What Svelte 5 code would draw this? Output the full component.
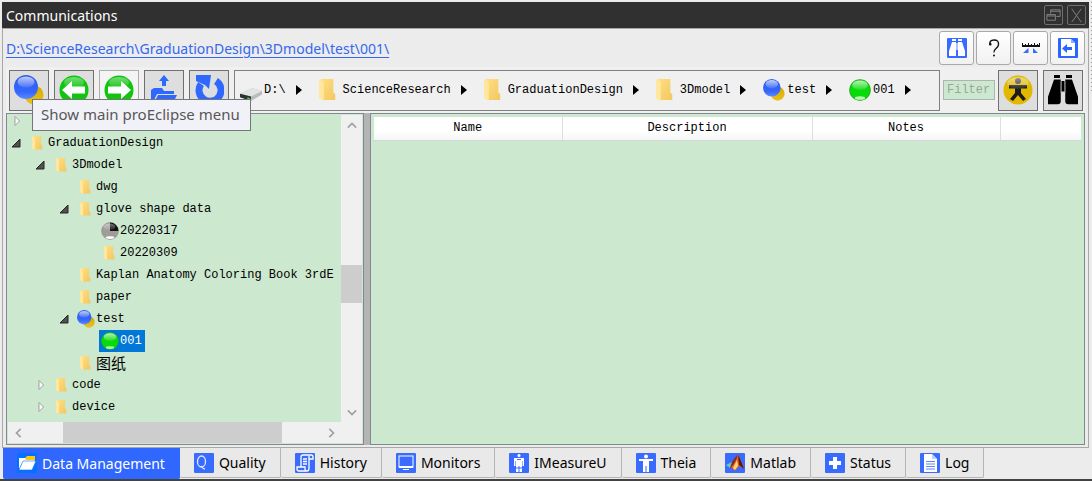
<script>
  const toolButtons = [
    { icon: 'spheres', label: 'Show main proEclipse menu' },
    { icon: 'back', label: 'Back' },
    { icon: 'forward', label: 'Forward', light: true },
    { icon: 'up', label: 'Up one level' },
    { icon: 'refresh', label: 'Refresh' }
  ];

  const headerButtons = [
    { icon: 'find', label: 'Find' },
    { icon: 'help', label: 'Help' },
    { icon: 'scale', label: 'Scale' },
    { icon: 'exit', label: 'Exit' }
  ];

  const crumbs = [
    { icon: 'drive', label: 'D:\\' },
    { icon: 'folder', label: 'ScienceResearch' },
    { icon: 'folder', label: 'GraduationDesign' },
    { icon: 'folder', label: '3Dmodel' },
    { icon: 'spheres', label: 'test' },
    { icon: 'green', label: '001' }
  ];

  const nodes = [
    { depth: 0, label: '', state: 'closed' },
    { depth: 0, label: 'GraduationDesign', icon: 'folder', state: 'open' },
    { depth: 1, label: '3Dmodel', icon: 'folder', state: 'open' },
    { depth: 2, label: 'dwg', icon: 'folder' },
    { depth: 2, label: 'glove shape data', icon: 'folder', state: 'open' },
    { depth: 3, label: '20220317', icon: 'grey' },
    { depth: 3, label: '20220309', icon: 'folder' },
    { depth: 2, label: 'Kaplan Anatomy Coloring Book 3rdE', icon: 'folder' },
    { depth: 2, label: 'paper', icon: 'folder' },
    { depth: 2, label: 'test', icon: 'spheres', state: 'open' },
    { depth: 3, label: '001', icon: 'green' },
    { depth: 2, label: '图纸', icon: 'folder', cjk: true },
    { depth: 1, label: 'code', icon: 'folder', state: 'closed' },
    { depth: 1, label: 'device', icon: 'folder', state: 'closed' }
  ];

  const tabs = [
    { icon: 'data', label: 'Data Management' },
    { icon: 'quality', label: 'Quality' },
    { icon: 'history', label: 'History' },
    { icon: 'monitor', label: 'Monitors' },
    { icon: 'imeasure', label: 'IMeasureU' },
    { icon: 'theia', label: 'Theia' },
    { icon: 'matlab', label: 'Matlab' },
    { icon: 'status', label: 'Status' },
    { icon: 'log', label: 'Log' }
  ];

  let activeTab = $state('Data Management');
  let selected = $state('001');
  let filter = $state('');
</script>

{#snippet icon(name)}
  {#if name === 'folder'}
    <svg viewBox="2 1 17 23" preserveAspectRatio="xMinYMid" aria-hidden="true">
      <path d="M4 1h13v14l2 2v6H5z" fill="url(#folderBack)" />
      <path d="M2 1l5 3v20l-5-3z" fill="#ffe7a0" />
    </svg>
  {:else if name === 'spheres'}
    <svg viewBox="0 0 30 30" aria-hidden="true">
      <circle cx="20" cy="20" r="9.5" fill="url(#gold)" />
      <circle cx="12" cy="12" r="12" fill="url(#blue)" />
      <ellipse cx="12" cy="7" rx="8.5" ry="5.5" fill="url(#shine)" />
    </svg>
  {:else if name === 'green'}
    <svg viewBox="0 0 30 30" aria-hidden="true">
      <circle cx="15" cy="15" r="14" fill="#08dc08" stroke="#22b022" stroke-width="1.4" />
      <ellipse cx="15" cy="8.5" rx="10.5" ry="6.5" fill="url(#shine)" />
      <ellipse cx="15" cy="26" rx="7" ry="2.4" fill="#b8ffb0" />
    </svg>
  {:else if name === 'grey'}
    <svg viewBox="0 0 30 30" aria-hidden="true">
      <circle cx="15" cy="15" r="14" fill="#a09c9c" stroke="#8c8888" />
      <path d="M15 15V1a14 14 0 0 1 14 14z" fill="#111" />
      <ellipse cx="14" cy="8" rx="10" ry="5.5" fill="url(#shine)" opacity=".6" />
      <ellipse cx="15" cy="26" rx="7" ry="2.4" fill="#fff" />
    </svg>
  {:else if name === 'drive'}
    <svg viewBox="0 0 24 24" aria-hidden="true">
      <path d="M0 16l13-6 11 3v4l-12 7L0 20z" fill="#b9bcbe" />
      <path d="M0 16l13-6 11 3-12 6z" fill="#e2e3e4" />
      <path d="M0 16l12 3v5L0 20z" fill="#2c3030" />
      <path d="M8 20l3 1v2l-3-1z" fill="#35e535" />
    </svg>
  {:else if name === 'back' || name === 'forward'}
    <svg viewBox="0 0 30 30" aria-hidden="true">
      <circle cx="15" cy="15" r="14.5" fill="#10c410" />
      <ellipse cx="15" cy="7.5" rx="10" ry="5.5" fill="url(#shine)" opacity=".6" />
      {#if name === 'back'}
        <path d="M3 15l10-9v5.5h13v7H13V24z" fill="#fff" />
      {:else}
        <path d="M27 15L17 6v5.5H4v7h13V24z" fill="#fff" />
      {/if}
    </svg>
  {:else if name === 'up'}
    <svg viewBox="0 0 30 30" aria-hidden="true" fill="#2e68ff">
      <path d="M15 0l5 6h-3v5h-4V6h-3z" />
      <path d="M2 30V15l3-2h8l2 3h10v3H8L4 27z" />
      <path d="M9 20h19l-5 10H4z" />
    </svg>
  {:else if name === 'refresh'}
    <svg viewBox="0 0 30 30" aria-hidden="true">
      <path d="M7 9a11 11 0 1 0 15-3" fill="none" stroke="#2e68ff" stroke-width="7" />
      <path d="M2 0h15l-2 14-4-4-9-4z" fill="#2e68ff" />
    </svg>
  {:else if name === 'find' || name === 'binoculars'}
    <svg viewBox="0 0 20 20" aria-hidden="true">
      {#if name === 'find'}
        <rect width="20" height="20" rx="1" fill="#3a6bff" />
        <path d="M5 1h4v2H5zm6 0h4v2h-4zM5 4h4v14H2v-5zm6 0h4l3 9v5h-7z" fill="#fff" />
        <path d="M9 5h2v7H9z" fill="#a9c0ff" />
      {:else}
        <path d="M4 0h4v2H4zm8 0h4v2h-4zM4 3h4.500v14.500q0 2-2 2H0v-5zm7.500 0H16l4 11.500v5h-6.500q-2 0-2-2zM9 4h2v7H9z" />
        <path d="M8.500 4v8M11.500 4v8" stroke="#777" stroke-width=".5" />
      {/if}
    </svg>
  {:else if name === 'help'}
    <svg viewBox="0 0 20 20" aria-hidden="true" fill="none" stroke="#111" stroke-width="1.4">
      <path d="M6 7q-1-5 4-5t4.500 4.500q0 2-2.500 4T10 14.500" />
      <circle cx="10" cy="17.500" r="1" fill="#111" stroke="none" />
      <circle cx="6.300" cy="6.300" r=".6" fill="#111" />
    </svg>
  {:else if name === 'scale'}
    <svg viewBox="0 0 20 20" aria-hidden="true">
      <path d="M1 8h18" stroke="#111" stroke-width="2" />
      <path d="M1.500 5v3M4.500 6v2M7.500 5v3M10.500 6v2M13.500 5v3M16.500 6v2M18.500 5v3" stroke="#111" />
      <path d="M7.500 10v5H2zM12 10l5 5h-5z" fill="#3a6bff" />
    </svg>
  {:else if name === 'exit'}
    <svg viewBox="0 0 20 20" aria-hidden="true">
      <rect width="20" height="20" rx="1" fill="#2b66ff" />
      <path d="M3 1h10l4 4v13H3z" fill="#fff" />
      <path d="M13 1v4h4z" fill="#8ab0ff" />
      <path d="M4 10.500l5-4.500v3h5v3H9v3z" fill="#2b66ff" />
    </svg>
  {:else if name === 'person'}
    <svg viewBox="0 0 30 30" aria-hidden="true">
      <circle cx="15" cy="15" r="14.500" fill="#e0b800" />
      <circle cx="15" cy="6" r="3" fill="#333" />
      <path d="M6 10h18v3.500h-6V18l5 6-3 2-5-6-5 6-3-2 5-6v-4.500H6z" fill="#1c1c1c" />
      <ellipse cx="15" cy="8" rx="11" ry="6" fill="url(#shine)" opacity=".7" />
    </svg>
  {:else if name === 'matlab'}
    <svg viewBox="0 0 20 20" aria-hidden="true">
      <rect width="20" height="20" rx="1" fill="#3a6bff" />
      <path d="M1 12l6-3 2 3-4 3z" fill="#6fc3c8" />
      <path d="M7 9q4-6 6-7l-4 13-4 0z" fill="#8a2a12" />
      <path d="M13 2q2 3 6 14l-5-3-4 5-4-4q4-3 7-12z" fill="#e8641a" />
      <path d="M13 2q2 3 6 14l-5-4z" fill="#5e1608" />
      <path d="M12 7l1 6-3 4-2-2z" fill="#ffd17a" />
    </svg>
  {:else}
    <svg viewBox="0 0 20 20" aria-hidden="true">
      <rect width="20" height="20" rx="1" fill={name === 'data' ? '#0870ff' : '#3a6bff'} />
      {#if name === 'data'}
        <path d="M8 5l2-2h8v6H8z" fill="#ffc61a" />
        <path d="M2 5h6l1 2h8v2H6l-4 7z" fill="#fff" />
        <path d="M6 8h13l-4 9H2z" fill="#fff" stroke="#0870ff" stroke-width=".6" />
      {:else if name === 'quality'}
        <ellipse cx="7.500" cy="8.500" rx="4" ry="5.500" fill="none" stroke="#dfe8ff" stroke-width="1.300" />
        <path d="M7 13q2 3 4 3" fill="none" stroke="#dfe8ff" stroke-width="1.300" />
      {:else if name === 'history'}
        <path d="M6 14V4q0-2 2-2h8q2 0 2 2v2h-4M14 3v12q0 3-2 3H4q-2 0-2-2v-2h8v2q0 2 2 2M8 6h4M8 8.500h4M8 11h4" fill="none" stroke="#fff" stroke-width="1.300" />
      {:else if name === 'monitor'}
        <rect x="3" y="3" width="14" height="11" fill="none" stroke="#fff" />
        <path d="M3 13h14v2H3zM7 16h6v1H7z" fill="#fff" />
      {:else if name === 'imeasure'}
        <circle cx="10" cy="2.500" r="1.500" fill="#fff" />
        <path d="M5 5h10v8h-1.500V8H13v11h-2.500v-6h-1v6H7V8h-.5v5H5z" fill="#fff" />
        <path d="M8 6.500h4M7 15h6" stroke="#3a6bff" />
      {:else if name === 'theia'}
        <circle cx="10" cy="3.500" r="2" fill="#fff" />
        <path d="M3 6h14v2h-4v11h-2.500v-6h-1v6H7V8H3z" fill="#fff" />
      {:else if name === 'status'}
        <path d="M8 4h4v4h4v4h-4v4H8v-4H4V8h4z" fill="#fff" />
      {:else if name === 'log'}
        <path d="M4 1h8l5 5v13H4z" fill="#fff" />
        <path d="M12 1v5h5z" fill="#bcd0ff" />
        <path d="M6 8.500h9M6 11h9M6 13.500h9M6 16h9" stroke="#5b85ff" />
      {/if}
    </svg>
  {/if}
{/snippet}

{#snippet chevron(d)}
  <svg viewBox="0 0 12 12" aria-hidden="true">
    <path {d} fill="none" stroke="#a0a0a0" stroke-width="2" />
  </svg>
{/snippet}

<svg class="defs" aria-hidden="true">
  <defs>
    <linearGradient id="folderBack" x1="0" x2="1" y1="0" y2="1">
      <stop offset="0" stop-color="#ffdf85" />
      <stop offset="1" stop-color="#f3c75e" />
    </linearGradient>
    <linearGradient id="blue" x1="0" x2="0" y1="0" y2="1">
      <stop offset="0" stop-color="#2f5bea" />
      <stop offset=".7" stop-color="#3467ff" />
      <stop offset="1" stop-color="#5b8aff" />
    </linearGradient>
    <linearGradient id="gold" x1="0" x2="0" y1="0" y2="1">
      <stop offset="0" stop-color="#d6a800" />
      <stop offset="1" stop-color="#e9c21c" />
    </linearGradient>
    <linearGradient id="shine" x1="0" x2="0" y1="0" y2="1">
      <stop offset="0" stop-color="#fff" stop-opacity=".7" />
      <stop offset="1" stop-color="#fff" stop-opacity=".1" />
    </linearGradient>
  </defs>
</svg>

<div class="app">
  <div class="window">
    <header class="title-bar">
      <h1>Communications</h1>
      <button aria-label="Restore">
        <svg viewBox="0 0 18 18" aria-hidden="true">
          <path d="M6 7V3h10v7h-4M6 4.500h10M2 8h9v6H2zM2 9.500h9" />
        </svg>
      </button>
      <button aria-label="Close">
        <svg viewBox="0 0 18 18" aria-hidden="true">
          <path d="M4 2l10 14M14 2L4 16" />
        </svg>
      </button>
    </header>

    <main class="panel">
      <div class="path-row">
        <a href="#path">D:\ScienceResearch\GraduationDesign\3Dmodel\test\001\</a>
        {#each headerButtons as button}
          <button class="small-button" aria-label={button.label}>{@render icon(button.icon)}</button>
        {/each}
      </div>

      <div class="toolbar">
        {#each toolButtons as button, i}
          <div class="tool">
            <button class="tool-button" class:light={button.light} aria-label={button.label}>
              {@render icon(button.icon)}
            </button>
            {#if i === 0}
              <div class="tooltip" role="tooltip">{button.label}</div>
            {/if}
          </div>
        {/each}
        <nav class="crumbs" aria-label="Current folder">
          {#each crumbs as crumb}
            <button class="crumb">
              <span class="crumb-icon">{@render icon(crumb.icon)}</span>
              {crumb.label}
              <svg class="crumb-arrow" viewBox="0 0 6 10" aria-hidden="true"><path d="M0 0l6 5-6 5z" /></svg>
            </button>
          {/each}
        </nav>
        <input class="filter" placeholder="Filter" aria-label="Filter" bind:value={filter} />
        <button class="tool-button" aria-label="Subject">{@render icon('person')}</button>
        <button class="tool-button" aria-label="Search">{@render icon('binoculars')}</button>
      </div>

      <div class="content">
        <section class="tree-box">
          <ul class="tree" role="tree">
            {#each nodes as node}
              <li
                class="node"
                role="treeitem"
                aria-selected={node.label === selected}
                aria-expanded={node.state ? node.state === 'open' : undefined}
                style="padding-left: {3 + node.depth * 24}px"
              >
                <span class="toggle">
                  {#if node.state === 'open'}
                    <svg viewBox="0 0 10 10" aria-hidden="true"><path d="M9 1v8H1z" fill="#505050" stroke="#262626" /></svg>
                  {:else if node.state === 'closed'}
                    <svg viewBox="0 0 10 10" aria-hidden="true"><path d="M4 0.500v9L8.500 5z" fill="#fff" stroke="#a0a0a0" /></svg>
                  {/if}
                </span>
                {#if node.label}
                  <button
                    class="item"
                    class:selected={node.label === selected}
                    class:cjk={node.cjk}
                    onclick={() => (selected = node.label)}
                  >
                    <span class="node-icon" class:narrow={node.icon === 'folder'}>{@render icon(node.icon)}</span>
                    {node.label}
                  </button>
                {/if}
              </li>
            {/each}
          </ul>
          <div class="scroll vertical">
            <button aria-label="Scroll up">{@render chevron('M1 8l5-5 5 5')}</button>
            <div class="track"><div class="thumb"></div></div>
            <button aria-label="Scroll down">{@render chevron('M1 4l5 5 5-5')}</button>
          </div>
          <div class="scroll horizontal">
            <button aria-label="Scroll left">{@render chevron('M8 1L3 6l5 5')}</button>
            <div class="track"><div class="thumb"></div></div>
            <button aria-label="Scroll right">{@render chevron('M4 1l5 5-5 5')}</button>
          </div>
          <div class="corner"></div>
        </section>
        <div class="splitter"></div>
        <section class="table-box">
          <table>
            <thead>
              <tr>
                <th class="name">Name</th>
                <th class="description">Description</th>
                <th class="notes">Notes</th>
                <td></td>
              </tr>
            </thead>
          </table>
        </section>
      </div>
    </main>

    <nav class="tabs" aria-label="Panels">
      {#each tabs as tab}
        <button class="tab" class:active={tab.label === activeTab} onclick={() => (activeTab = tab.label)}>
          {@render icon(tab.icon)}
          {tab.label}
        </button>
      {/each}
    </nav>
  </div>
  <div class="grip"></div>
  <footer class="edge"></footer>
</div>

<style>
  :global(body) {
    margin: 0;
    background: #ececec;
  }

  .defs {
    position: absolute;
    width: 0;
    height: 0;
  }

  .app {
    display: grid;
    grid-template-columns: 1fr 2px;
    grid-template-rows: 1fr 2px;
    min-height: 100vh;
    background: #ececec;
    color: #000;
    font-family: "Noto Sans", "Open Sans", sans-serif;
    font-size: 14px;
  }

  .app * {
    box-sizing: border-box;
  }

  button {
    display: flex;
    align-items: center;
    justify-content: center;
    margin: 0;
    padding: 0;
    border: none;
    background: none;
    color: inherit;
    font: inherit;
    white-space: nowrap;
  }

  svg {
    display: block;
    flex: none;
  }

  .window {
    display: flex;
    flex-direction: column;
    min-width: 0;
    padding: 2px 1px 0 2px;
  }

  .title-bar {
    display: flex;
    align-items: center;
    gap: 4px;
    height: 26px;
    padding: 0 3px 0 4px;
    background: #303030;
    color: #fff;
  }

  h1 {
    flex: 1;
    margin: 0;
    font-size: 14px;
    font-weight: 400;
  }

  .title-bar button {
    width: 19px;
    height: 20px;
    border: 1px solid #6e6e6e;
    border-radius: 2px;
  }

  .title-bar svg {
    width: 17px;
    fill: none;
    stroke: #858585;
  }

  .panel {
    display: flex;
    flex: 1;
    flex-direction: column;
    padding: 0 3px 2px;
    border: 1px solid #a8a8a8;
  }

  .path-row {
    display: flex;
    align-items: center;
    gap: 2px;
    height: 38px;
  }

  .path-row a {
    flex: 1;
    color: #3468f0;
    text-underline-offset: 3px;
  }

  .small-button {
    width: 35px;
    height: 34px;
    border: 1px solid #a9a9a9;
    border-radius: 3px;
    background: linear-gradient(#fff, #f1f1f1);
  }

  .small-button svg {
    width: 20px;
    height: 20px;
  }

  .toolbar {
    display: flex;
    align-items: center;
    gap: 5px;
    height: 46px;
    padding: 0 2px 0 3px;
    background: #f0f0f0;
  }

  .tool {
    position: relative;
  }

  .tool-button {
    width: 40px;
    height: 41px;
    border: 1px solid #707070;
    background: #dedede;
  }

  .tool-button.light {
    border-color: #adadad;
    background: #f4f4f4;
  }

  .tool-button svg {
    width: 30px;
    height: 30px;
  }

  .tooltip {
    position: absolute;
    z-index: 2;
    top: 29px;
    left: 23px;
    height: 32px;
    padding: 0 10px 0 8px;
    border: 1px solid #767676;
    background: #f1f2f7;
    color: #575757;
    font-size: 15px;
    line-height: 29px;
    white-space: nowrap;
  }

  .crumbs {
    display: flex;
    flex: 1;
    align-items: center;
    gap: 17px;
    min-width: 0;
    height: 41px;
    padding: 0 5px;
    border: 1px solid #808080;
    background: #f0f0f0;
    overflow: hidden;
  }

  .crumb,
  .filter,
  .tree,
  th {
    font-family: "Liberation Mono", "Noto Sans CJK SC", monospace;
    font-size: 12px;
  }

  .crumb-icon {
    width: 24px;
  }

  .crumb-icon svg {
    width: 22px;
    height: 22px;
  }

  .crumb-arrow {
    width: 6px;
    height: 10px;
    margin-left: 10px;
  }

  .filter {
    width: 52px;
    height: 20px;
    margin: 0 -2px;
    padding: 0 3px;
    border: 1px solid #adb5b0;
    background: #cce8cf;
  }

  .filter::placeholder {
    color: #9aa69c;
  }

  .content {
    display: flex;
    flex: 1;
  }

  .tree-box {
    display: grid;
    grid-template-columns: minmax(0, 1fr) 21px;
    grid-template-rows: minmax(0, 1fr) 21px;
    flex: 0 1 358px;
    padding: 1px;
    border: 1px solid #828790;
    background: #cce8cf;
  }

  .tree {
    display: flex;
    flex-direction: column;
    justify-content: flex-end;
    height: 306px;
    min-height: 100%;
    margin: 0;
    padding: 0 0 4px;
    list-style: none;
    overflow: hidden;
  }

  .node {
    display: flex;
    flex: none;
    align-items: center;
    gap: 6px;
    height: 22px;
  }

  .toggle,
  .toggle svg {
    flex: none;
    width: 10px;
    height: 10px;
  }

  .item {
    height: 22px;
    gap: 1px;
    padding: 0 3px 0 2px;
  }

  .item.selected {
    background: #0078d7;
    color: #fff;
  }

  .item.cjk {
    font-size: 15px;
  }

  .node-icon svg {
    width: 18px;
    height: 18px;
  }

  .node-icon.narrow svg {
    width: 12px;
    height: 14px;
    margin: 0 3px;
  }

  .scroll {
    display: flex;
    background: #f0f0f0;
  }

  .scroll button {
    width: 21px;
    height: 21px;
  }

  .scroll svg {
    width: 10px;
    height: 10px;
  }

  .vertical {
    flex-direction: column;
  }

  .track {
    display: flex;
    flex: 1;
    flex-direction: inherit;
  }

  .thumb {
    background: #cdcdcd;
  }

  .vertical .thumb {
    height: 38px;
    margin-top: 129px;
  }

  .horizontal .thumb {
    width: 219px;
    margin-left: 34px;
  }

  .corner {
    background: #f0f0f0;
  }

  .splitter {
    width: 6px;
    background: #b4b4b4;
  }

  .table-box {
    flex: 1;
    min-width: 0;
    padding: 3px;
    border: 1px solid #828790;
    background: #cce8cf;
  }

  table {
    width: 100%;
    border-collapse: collapse;
    table-layout: fixed;
    background: linear-gradient(#fff 60%, #f5f6f7);
  }

  th,
  td {
    height: 23px;
    padding: 0;
    border-bottom: 1px solid #d5d5d5;
  }

  th {
    border-right: 1px solid #dedede;
    font-weight: 400;
  }

  .name,
  .notes {
    width: 188px;
  }

  .description {
    width: 250px;
  }

  .tabs {
    display: flex;
    height: 31px;
    padding-left: 1px;
  }

  .tab {
    gap: 5px;
    height: 30px;
    padding: 0 14px;
    border: 1px solid #b5b5b5;
    border-width: 0 1px 1px 0;
    border-radius: 0 0 2px 2px;
    background: #e9e9e9;
  }

  .tab.active {
    height: 31px;
    border-color: #3068ff;
    background: #3068ff;
    color: #fff;
  }

  .tab svg {
    width: 20px;
    height: 20px;
  }

  .grip {
    margin: 2px 0 0 1px;
    height: 92px;
    background: repeating-linear-gradient(#a0a0a0 0 1px, #ececec 1px 4px);
  }

  .edge {
    grid-column: 1 / -1;
    background: #444;
  }
</style>
